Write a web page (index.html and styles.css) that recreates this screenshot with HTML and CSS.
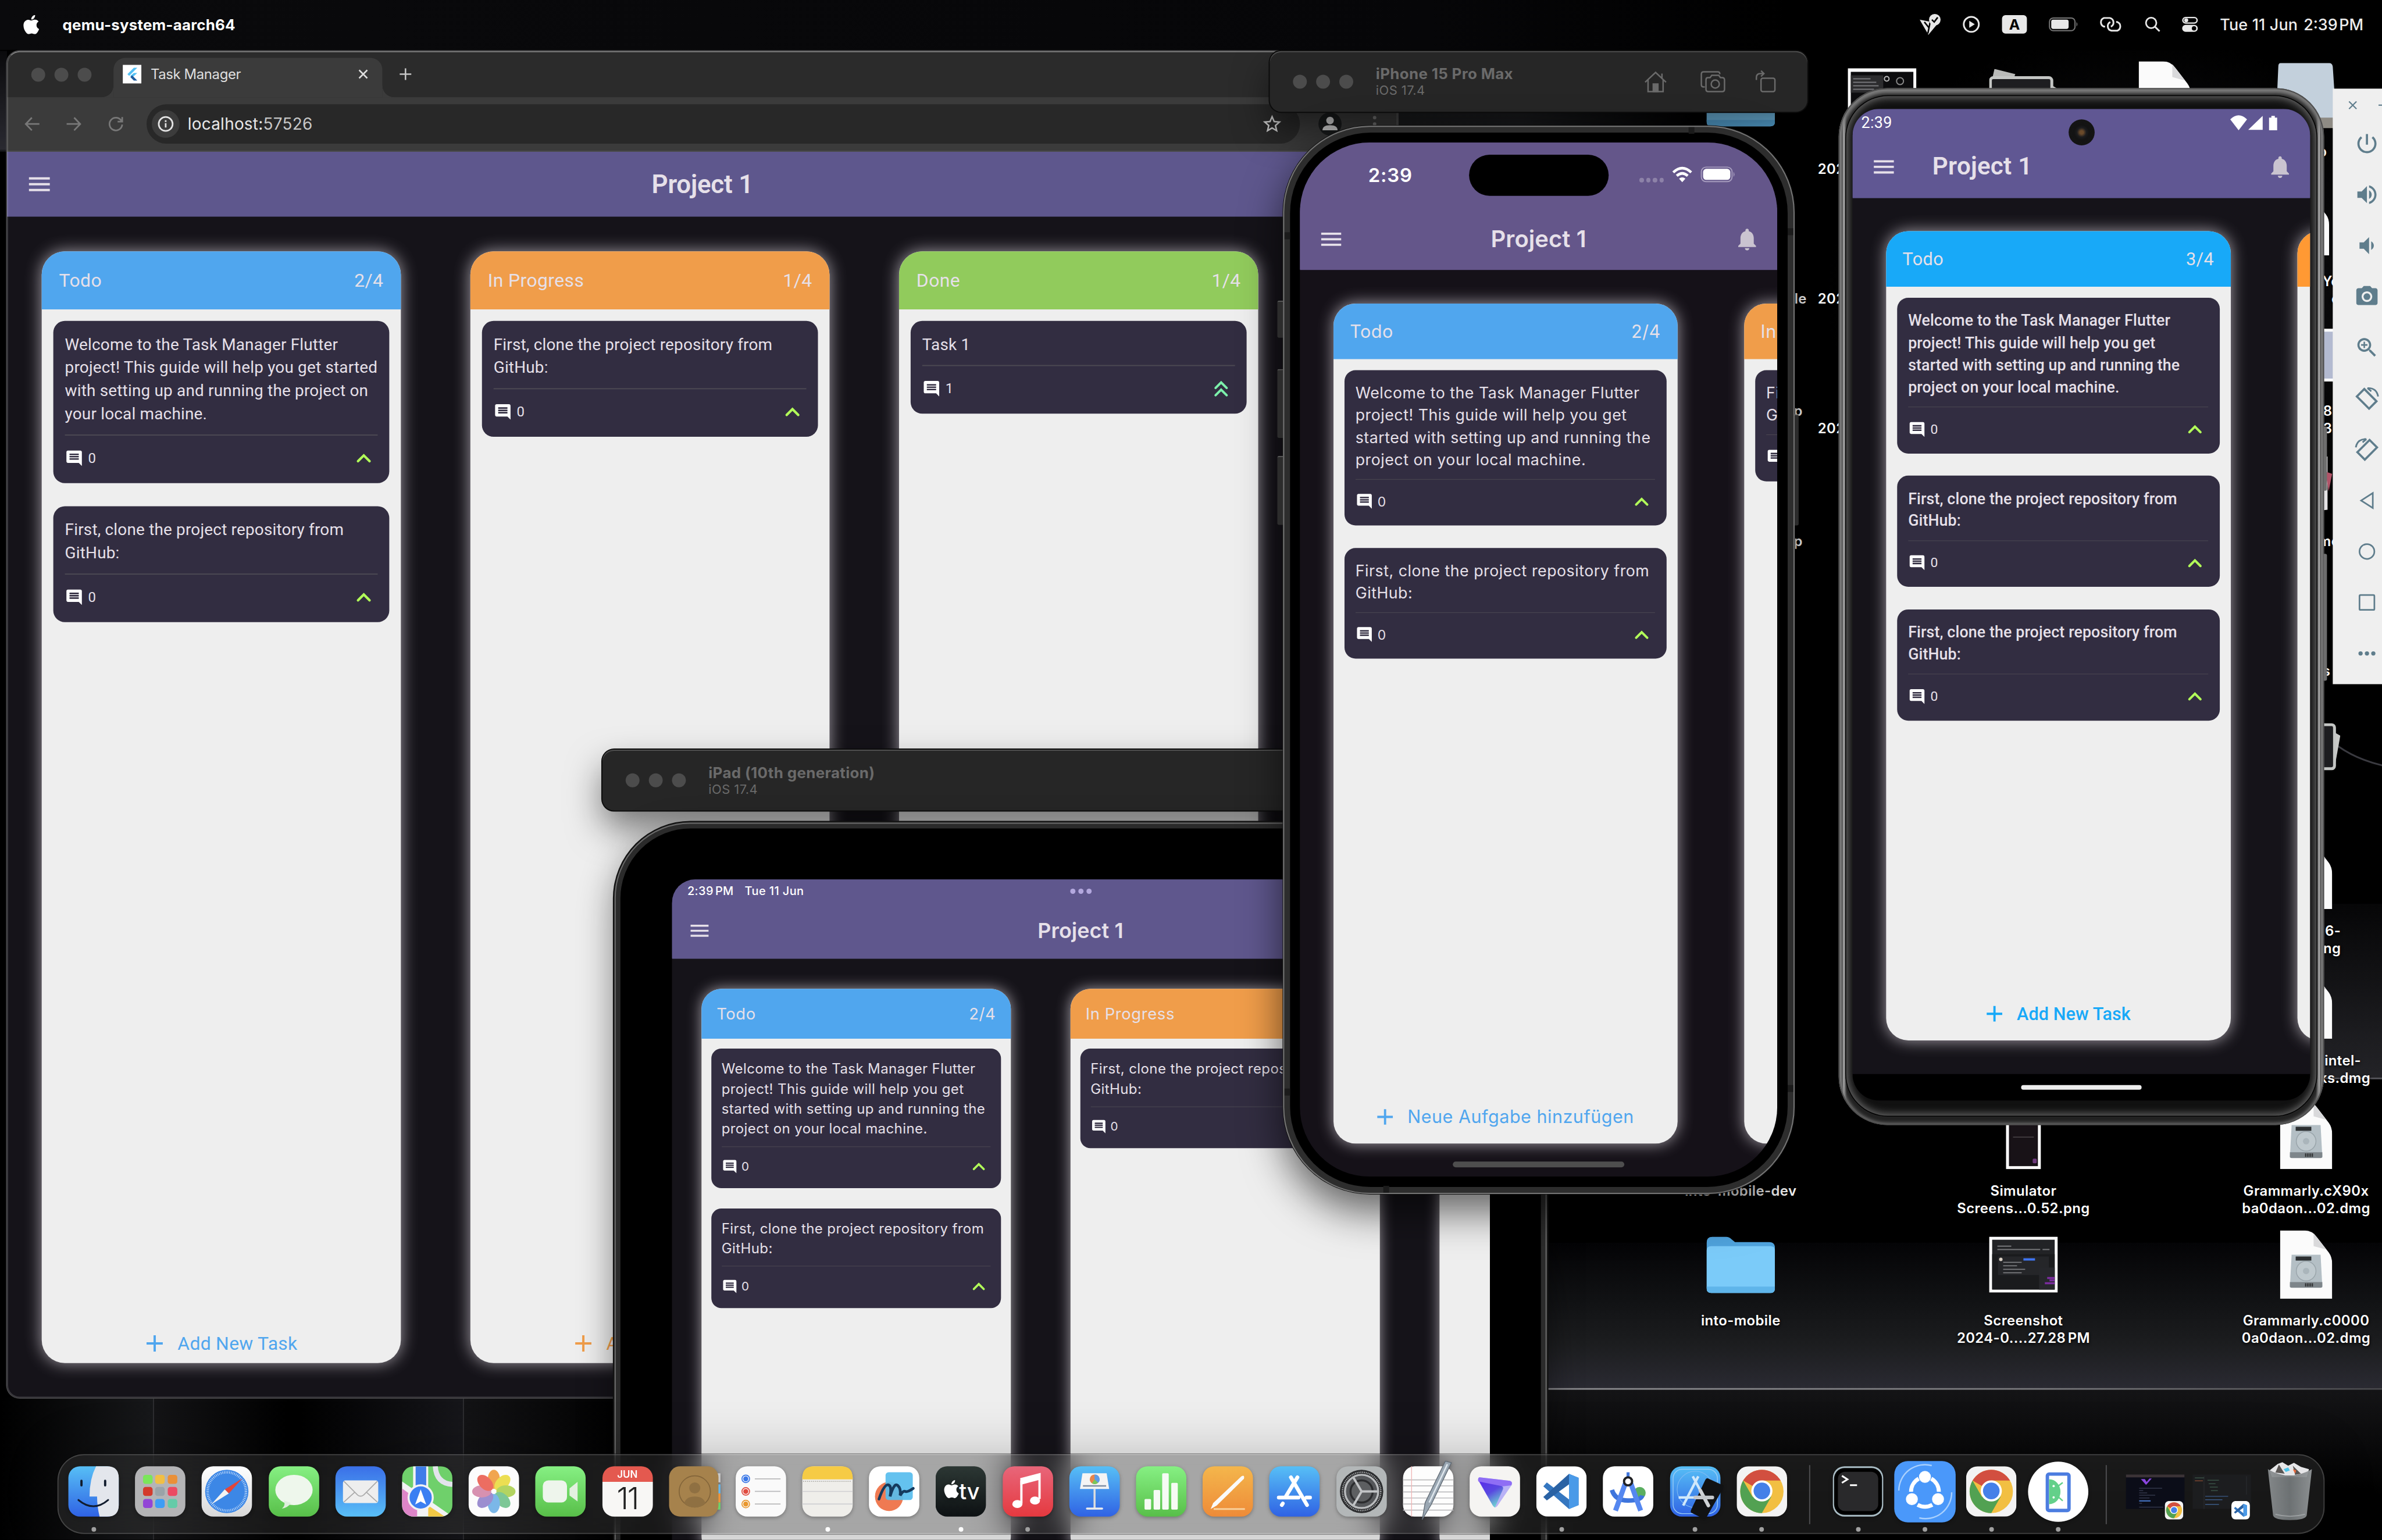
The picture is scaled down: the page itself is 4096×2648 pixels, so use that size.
FILE: index.html
```html
<!DOCTYPE html>
<html lang="en">
<head>
<meta charset="utf-8">
<title>Desktop</title>
<link rel="stylesheet" href="styles.css">
</head>
<body>
<svg class="sprite" aria-hidden="true">
  <symbol id="menu" viewBox="0 0 24 24"><path d="M3 18h18v-2H3v2zm0-5h18v-2H3v2zm0-7v2h18V6H3z"/></symbol>
  <symbol id="bell" viewBox="0 0 24 24"><path d="M12 22c1.1 0 2-.9 2-2h-4c0 1.1.89 2 2 2zm6-6v-5c0-3.07-1.64-5.64-4.5-6.32V4c0-.83-.67-1.5-1.5-1.5s-1.5.67-1.5 1.5v.68C7.63 5.36 6 7.92 6 11v5l-2 2v1h16v-1l-2-2z"/></symbol>
  <symbol id="comment" viewBox="0 0 24 24"><path d="M21.99 4c0-1.1-.89-2-1.99-2H4c-1.1 0-2 .9-2 2v12c0 1.1.9 2 2 2h14l4 4-.01-18zM18 14H6v-2h12v2zm0-3H6V9h12v2zm0-3H6V6h12v2z"/></symbol>
  <symbol id="up" viewBox="0 0 24 24"><path d="M7 14.6l5-5 5 5" fill="none" stroke="currentColor" stroke-width="2.1" stroke-linecap="round" stroke-linejoin="miter"/></symbol>
  <symbol id="up2" viewBox="0 0 24 24"><path d="M7.2 11.4l4.8-4.8 4.8 4.8M7.2 17.6l4.8-4.8 4.8 4.8" fill="none" stroke="currentColor" stroke-width="2" stroke-linecap="round"/></symbol>
  <symbol id="add" viewBox="0 0 24 24"><path d="M19 13h-6v6h-2v-6H5v-2h6V5h2v6h6v2z"/></symbol>
  <symbol id="star" viewBox="0 0 24 24"><path d="M22 9.24l-7.19-.62L12 2 9.19 8.63 2 9.24l5.46 4.73L5.82 21 12 17.27 18.18 21l-1.63-7.03L22 9.24zM12 15.4l-3.76 2.27 1-4.28-3.32-2.88 4.38-.38L12 6.1l1.71 4.04 4.38.38-3.32 2.88 1 4.28L12 15.4z"/></symbol>
  <symbol id="apple" viewBox="0 0 24 24"><path d="M12.152 6.896c-.948 0-2.415-1.078-3.96-1.04-2.04.027-3.91 1.183-4.961 3.014-2.117 3.675-.546 9.103 1.519 12.09 1.013 1.454 2.208 3.09 3.792 3.039 1.52-.065 2.09-.987 3.935-.987 1.831 0 2.35.987 3.96.948 1.637-.026 2.676-1.48 3.676-2.948 1.156-1.688 1.636-3.325 1.662-3.415-.039-.013-3.182-1.221-3.22-4.857-.026-3.04 2.48-4.494 2.597-4.559-1.429-2.09-3.623-2.324-4.39-2.376-2-.156-3.675 1.09-4.61 1.09zM15.53 3.83c.843-1.012 1.4-2.427 1.245-3.83-1.207.052-2.662.805-3.532 1.818-.78.896-1.454 2.338-1.273 3.714 1.338.104 2.715-.688 3.559-1.701"/></symbol>
  <symbol id="folder" viewBox="0 0 118 100"><path d="M0 12Q0 2 10 2H34Q39 2 43 6L49 11H108Q118 11 118 21V90H0Z" fill="#4fa3dd"/><path d="M0 26Q0 18 8 18H110Q118 18 118 26V91Q118 99 110 99H8Q0 99 0 91Z" fill="#7bcbf9"/><path d="M0 88H118V91Q118 99 110 99H8Q0 99 0 91Z" fill="#5fb5ea"/></symbol>
  <symbol id="doc" viewBox="0 0 90 118"><path d="M0 0H42Q56 0 64 12L84 38Q90 46 90 58V118H0Z" fill="#fbfbfb"/><path d="M58 5L58 27L80 33Z" fill="#d9d9db"/></symbol>
  <symbol id="dmg" viewBox="0 0 90 118"><use href="#doc"/><path d="M20 42H70L73 98H17Z" fill="#b4bfc5"/><path d="M17 89H73V96Q73 99 70 99H20Q17 99 17 96Z" fill="#7d858a"/><circle cx="45" cy="70" r="17" fill="#bfc9ce" stroke="#9aa5ab" stroke-width="1.5"/><circle cx="45" cy="70" r="5.500" fill="#aab5bb"/><rect x="27" y="45" width="27" height="7" fill="#2c2f31"/><path d="M44 91v6M47 91v6M50 91v6M53 91v6M56 91v6" stroke="#222" stroke-width="1.600"/></symbol>
  <symbol id="stack" viewBox="0 0 118 100"><path d="M9 0L45 9 40 22H4Z" fill="#b9bab8"/><path d="M104 26L118 34 108 90H100Z" fill="#c9cac8"/><rect x="2" y="15" width="106" height="76" rx="5" fill="#1d1d20" stroke="#c4c6c4" stroke-width="5"/></symbol>
  <symbol id="chrome" viewBox="0 0 100 100"><rect width="100" height="100" rx="23" fill="#f3f3f3"/><circle cx="50" cy="50" r="43" fill="#f2bf42"/><path d="M50 50L12.800 28.500A43 43 0 0 1 87.200 28.500Z" fill="#d24f40"/><path d="M50 50L87.200 28.500H50Z" fill="#d24f40"/><path d="M12.800 28.500A43 43 0 0 0 50 93L68.600 60.700 50 50 31.400 60.700Z" fill="#52a152"/><path d="M50 93L70 58 87.200 28.500H50L68.600 60Z" fill="#f2bf42"/><circle cx="50" cy="49" r="21" fill="#fff"/><circle cx="50" cy="49" r="16.500" fill="#4580e8"/></symbol>
  <symbol id="vscode" viewBox="0 0 100 100"><rect width="100" height="100" rx="23" fill="#fff"/><path d="M65 15L84 23V77L65 85 14 40 21 32 65 66Z" fill="#3577c0"/><path d="M65 15V36L21 68 14 61Z" fill="#2a62a4"/><path d="M65 15L84 23V77L65 85Z" fill="#4a9ae8"/></symbol>
  <linearGradient id="gGreen" x2="0" y2="1"><stop stop-color="#86f083"/><stop offset="1" stop-color="#58bf49"/></linearGradient>
  <linearGradient id="gBlue" x2="0" y2="1"><stop stop-color="#3a6fe8"/><stop offset="1" stop-color="#59bff7"/></linearGradient>
  <linearGradient id="gSky" x2="0" y2="1"><stop stop-color="#57bff6"/><stop offset="1" stop-color="#2f62e4"/></linearGradient>
  <linearGradient id="gWhite" x2="0" y2="1"><stop stop-color="#fff"/><stop offset="1" stop-color="#d8d8d8"/></linearGradient>
  <linearGradient id="gRed" x2="0" y2="1"><stop stop-color="#e8667a"/><stop offset="1" stop-color="#e5393f"/></linearGradient>
  <linearGradient id="gOrange" x2="0" y2="1"><stop stop-color="#f4b64c"/><stop offset="1" stop-color="#ee8b38"/></linearGradient>
  <linearGradient id="gTrash"><stop stop-color="#8b8f91"/><stop offset=".5" stop-color="#73787a"/><stop offset="1" stop-color="#94989a"/></linearGradient>
  <linearGradient id="gProton" x1="0.200" y1="0" x2="0.700" y2="1"><stop stop-color="#5a2bea"/><stop offset=".5" stop-color="#5948e0"/><stop offset="1" stop-color="#6fe0d0"/></linearGradient>
</svg>

<div class="desktop">
  <div class="wall">
    <div class="panels"><i></i><i></i><i></i></div>
    <svg class="arc" viewBox="0 0 80 40"><path d="M0 0Q34 24 80 34" fill="none" stroke="#3a3a40" stroke-width="3"/></svg>
  </div>

  <!-- Desktop files -->
  <div class="files">
    <div class="file c1 r1"><div class="pic"><svg class="w118"><use href="#folder"/></svg></div></div>
    <div class="file c1 r2"><div class="pic"></div><p class="to" style="--end:114px"><br>le</p></div>
    <div class="file c1 r3"><div class="pic"></div><p class="to" style="--end:107px">p</p></div>
    <div class="file c1 r4"><div class="pic"></div><p class="to" style="--end:107px">p</p></div>
    <div class="file c1 r9"><div class="pic"></div><p>into-mobile-dev</p></div>
    <div class="file c1 r10"><div class="pic"><svg class="w118"><use href="#folder"/></svg></div><p>into-mobile</p></div>

    <div class="file c2 r1"><div class="pic"><svg class="w118 tall" viewBox="0 0 118 102"><rect width="118" height="102" fill="#fff"/><rect x="5" y="6" width="108" height="92" fill="#0c0c0e"/><rect x="5" y="12" width="56" height="30" fill="#2c2c2e"/><path d="M9 18h30M9 24h40M9 30h44M9 36h36" stroke="#77777b" stroke-width="2"/><circle cx="67" cy="18" r="4" fill="none" stroke="#bbb" stroke-width="2"/><circle cx="90" cy="22" r="6" fill="none" stroke="#888" stroke-width="2"/></svg></div><p class="from"><br>202</p></div>
    <div class="file c2 r2"><div class="pic"></div><p class="from"><br>202</p></div>
    <div class="file c2 r3"><div class="pic"></div><p class="from"><br>202</p></div>

    <div class="file c3 r1"><div class="pic"><svg class="w118"><use href="#stack"/></svg></div></div>
    <div class="file c3 r9"><div class="pic"><svg class="w60" viewBox="0 0 60 118"><rect width="60" height="118" fill="#fff"/><rect x="5" y="5" width="50" height="108" fill="#181217"/><path d="M12 63h36" stroke="#4a4549" stroke-width="1.500"/><rect x="46" y="100" width="7" height="8" rx="2" fill="#6e3a7c"/></svg></div><p>Simulator<br>Screens...0.52.png</p></div>
    <div class="file c3 r10"><div class="pic"><svg class="w118 low" viewBox="0 0 118 96"><rect width="118" height="96" fill="#fff"/><rect x="5" y="5" width="108" height="86" fill="#222326"/><rect x="5" y="30" width="108" height="61" fill="#1a1b1d"/><path d="M14 16h24M14 22h74M92 22h12" stroke="#77787b" stroke-width="2"/><rect x="15" y="34" width="88" height="32" fill="#252629"/><rect x="59" y="37" width="20" height="4" fill="#3f74f0"/><circle cx="20" cy="39" r="3" fill="#d8cfc3"/><path d="M24 44h32M24 50h24M24 56h38M24 62h32" stroke="#88898c" stroke-width="1.500"/><rect x="86" y="53" width="27" height="38" fill="#26272b"/><path d="M100 71h13M104 75h9M96 80h17" stroke="#7a2c9e" stroke-width="3.500"/></svg></div><p>Screenshot<br>2024-0....27.28<small> </small>PM</p></div>

    <div class="file c4 r1"><div class="pic"><svg class="w90"><use href="#doc"/><path d="M22 49H68" stroke="#7f97a3" stroke-width="3"/></svg></div></div>

    <div class="file c5 r1"><div class="pic"><svg class="w104" viewBox="0 0 104 112"><path d="M8 0H92Q97 0 98 6L104 96H0L4 6Q4 0 8 0Z" fill="#c3d0dc"/><path d="M0 94H104V108Q104 112 100 112H4Q0 112 0 108Z" fill="#8e8b84"/></svg></div><p class="to" style="--end:36px">p</p></div>
    <div class="file c5 r2"><div class="pic"><svg class="w90 low"><use href="#doc"/></svg></div><p class="to" style="--end:58px">Yo<br>c</p></div>
    <div class="file c5 r3"><div class="pic"><svg class="w118 low" viewBox="0 0 118 91"><rect width="118" height="91" fill="#fff"/><rect x="5" y="5" width="108" height="81" fill="#b3bad0"/></svg></div><p class="to" style="--end:45px">8<br>3</p></div>
    <div class="file c5 r4"><div class="pic"><svg class="w90" viewBox="0 0 90 100"><path d="M10 0H82V92L10 100Z" fill="#e4e2e4"/><path d="M78 26L90 30 84 60Z" fill="#b05468"/></svg></div><p class="to" style="--end:58px">me</p></div>
    <div class="file c5 r5"><div class="pic"></div><p class="to" style="--end:42px">s</p></div>
    <div class="file c5 r6"><div class="pic"><svg class="w118"><use href="#stack"/></svg></div></div>
    <div class="file c5 r7"><div class="pic"><svg class="w90"><use href="#doc"/></svg></div><p class="to" style="--end:60px">6-<br>ng</p></div>
    <div class="file c5 r8"><div class="pic"><svg class="w90"><use href="#doc"/></svg></div><p class="to" style="--end:111px"><span class="in">intel-</span><br>ks.dmg</p></div>
    <div class="file c5 r9"><div class="pic"><svg class="w90"><use href="#dmg"/></svg></div><p>Grammarly.cX90x<br>ba0daon...02.dmg</p></div>
    <div class="file c5 r10"><div class="pic"><svg class="w90"><use href="#dmg"/></svg></div><p>Grammarly.c0000<br>0a0daon...02.dmg</p></div>
  </div>

  <!-- Browser window -->
  <section class="browser">
    <div class="tabs">
      <div class="lights"><i></i><i></i><i></i></div>
      <div class="tab">
        <svg class="fav" viewBox="0 0 32 32"><rect width="32" height="32" fill="#fff"/><path d="M19 5h6L11 19l-3-3Z" fill="#54c1f5"/><path d="M19 14h6L16 22l-3-3Z" fill="#54c1f5"/><path d="M13 21l3-3 9 9h-6Z" fill="#1d5a9e"/></svg>
        <span>Task Manager</span>
        <svg class="x" viewBox="0 0 18 18"><path d="M2 2l14 14M16 2L2 16" stroke="#dedede" stroke-width="2.600"/></svg>
      </div>
      <svg class="plus" viewBox="0 0 22 22"><path d="M11 1v20M1 11h20" stroke="#c6c6c6" stroke-width="2.600"/></svg>
    </div>
    <div class="toolbar">
      <svg viewBox="0 0 28 28"><path d="M26 14H3M13 3L2.500 14 13 25"/></svg>
      <svg viewBox="0 0 28 28"><path d="M2 14H25M15 3L25.500 14 15 25"/></svg>
      <svg viewBox="0 0 28 28"><path d="M23.500 8.500A11 11 0 1 0 25 15M25 2V10H17"/></svg>
      <div class="omni">
        <span class="info"><svg viewBox="0 0 28 28"><circle cx="14" cy="14" r="12" fill="none" stroke="#e3e3e3" stroke-width="2.800"/><path d="M14 12.500V20M14 7.500v3" stroke="#e3e3e3" stroke-width="2.800"/></svg></span>
        <span class="url"><b>localhost:</b>57526</span>
        <svg class="fav2"><use href="#star"/></svg>
      </div>
      <span class="avatar"><svg viewBox="0 0 40 40"><circle cx="20" cy="14" r="6.500"/><path d="M7 31Q7 22 20 22T33 31Z"/></svg></span>
      <span class="kebab"><i></i><i></i><i></i></span>
    </div>
    <div class="app web">
      <header class="appbar"><svg class="ic"><use href="#menu"/></svg><h1>Project 1</h1><span></span></header>
      <main class="board">
        <article class="col todo">
          <header><span>Todo</span><span>2/4</span></header>
          <div class="list">
            <div class="card"><p>Welcome to the Task Manager Flutter project! This guide will help you get started with setting up and running the project on your local machine.</p><footer><svg class="cm"><use href="#comment"/></svg><span>0</span><svg class="pr"><use href="#up"/></svg></footer></div>
            <div class="card"><p>First, clone the project repository from GitHub:</p><footer><svg class="cm"><use href="#comment"/></svg><span>0</span><svg class="pr"><use href="#up"/></svg></footer></div>
          </div>
          <div class="addrow"><svg><use href="#add"/></svg>Add New Task</div>
        </article>
        <article class="col prog">
          <header><span>In Progress</span><span>1/4</span></header>
          <div class="list">
            <div class="card"><p>First, clone the project repository from GitHub:</p><footer><svg class="cm"><use href="#comment"/></svg><span>0</span><svg class="pr"><use href="#up"/></svg></footer></div>
          </div>
          <div class="addrow"><svg><use href="#add"/></svg>Add New Task</div>
        </article>
        <article class="col done">
          <header><span>Done</span><span>1/4</span></header>
          <div class="list">
            <div class="card"><p>Task 1</p><footer><svg class="cm"><use href="#comment"/></svg><span>1</span><svg class="pr two"><use href="#up2"/></svg></footer></div>
          </div>
        </article>
      </main>
    </div>
  </section>

  <!-- iPad simulator -->
  <section class="simbar ipadbar">
    <div class="lights"><i></i><i></i><i></i></div>
    <div class="dev"><b>iPad (10th generation)</b><span>iOS 17.4</span></div>
  </section>
  <section class="ipad">
    <div class="app tablet">
      <div class="status"><span>2:39<small> </small>PM</span><span>Tue 11 Jun</span><em><i></i><i></i><i></i></em></div>
      <header class="appbar"><svg class="ic"><use href="#menu"/></svg><h1>Project 1</h1><span></span></header>
      <main class="board">
        <article class="col todo">
          <header><span>Todo</span><span>2/4</span></header>
          <div class="list">
            <div class="card"><p>Welcome to the Task Manager Flutter project! This guide will help you get started with setting up and running the project on your local machine.</p><footer><svg class="cm"><use href="#comment"/></svg><span>0</span><svg class="pr"><use href="#up"/></svg></footer></div>
            <div class="card"><p>First, clone the project repository from GitHub:</p><footer><svg class="cm"><use href="#comment"/></svg><span>0</span><svg class="pr"><use href="#up"/></svg></footer></div>
          </div>
        </article>
        <article class="col prog">
          <header><span>In Progress</span></header>
          <div class="list">
            <div class="card"><p>First, clone the project repository from GitHub:</p><footer><svg class="cm"><use href="#comment"/></svg><span>0</span></footer></div>
          </div>
        </article>
        <article class="col done"><header></header></article>
      </main>
    </div>
  </section>

  <!-- iPhone simulator -->
  <section class="simbar phonebar">
    <div class="lights"><i></i><i></i><i></i></div>
    <div class="dev"><b>iPhone 15 Pro Max</b><span>iOS 17.4</span></div>
    <div class="acts">
      <svg viewBox="0 0 40 38"><path d="M2 20L20 3 38 20M7 16V36H33V16M31 13V5"/><path d="M16 36V23H24V36Z" fill="#6a6a6a"/></svg>
      <svg viewBox="0 0 44 38"><path d="M8 28H6Q2 28 2 24V6Q2 2 6 2H30Q34 2 34 6"/><path d="M13 12H17L20 8H32L35 12H38Q42 12 42 16V32Q42 36 38 36H14Q10 36 10 32V16Q10 12 13 12Z"/><circle cx="26" cy="23" r="7"/></svg>
      <svg viewBox="0 0 36 38"><rect x="10" y="13" width="24" height="23" rx="3"/><path d="M2 16V12Q2 5 9 5H14M10 0L15 5 10 10"/></svg>
    </div>
  </section>
  <section class="iphone">
    <i class="key k1"></i><i class="key k2"></i><i class="key k3"></i><i class="key k4"></i>
    <i class="band b1"></i><i class="band b2"></i><i class="band b3"></i><i class="band b4"></i><i class="band b5"></i><i class="band b6"></i>
    <div class="glass">
      <div class="app phone">
        <div class="status">
          <span class="clock">2:39</span><i class="island"></i>
          <div class="sys"><em><i></i><i></i><i></i><i></i></em>
            <svg class="wifi" viewBox="0 0 36 27"><path d="M2.500 9.500Q18-5 33.500 9.500M8.500 15.500Q18 7 27.500 15.500" fill="none" stroke="#fff" stroke-width="4.600"/><path d="M12.500 20.500Q18 16 23.500 20.500L18 26.500Z" fill="#fff"/></svg>
            <svg class="batt" viewBox="0 0 60 27"><rect x="1" y="1" width="53" height="25" rx="8" fill="none" stroke="#a59bbd" stroke-width="2"/><rect x="4" y="4" width="47" height="19" rx="5.500" fill="#fff"/><path d="M56.500 9Q60 13.500 56.500 18Z" fill="#a59bbd"/></svg>
          </div>
        </div>
        <header class="appbar"><svg class="ic"><use href="#menu"/></svg><h1>Project 1</h1><svg class="ic bell"><use href="#bell"/></svg></header>
        <main class="board">
          <article class="col todo">
            <header><span>Todo</span><span>2/4</span></header>
            <div class="list">
              <div class="card"><p>Welcome to the Task Manager Flutter project! This guide will help you get started with setting up and running the project on your local machine.</p><footer><svg class="cm"><use href="#comment"/></svg><span>0</span><svg class="pr"><use href="#up"/></svg></footer></div>
              <div class="card"><p>First, clone the project repository from GitHub:</p><footer><svg class="cm"><use href="#comment"/></svg><span>0</span><svg class="pr"><use href="#up"/></svg></footer></div>
            </div>
            <div class="addrow"><svg><use href="#add"/></svg>Neue Aufgabe hinzufügen</div>
          </article>
          <article class="col prog">
            <header><span>In</span></header>
            <div class="list"><div class="card"><p>Fi<br>G</p><footer><svg class="cm"><use href="#comment"/></svg></footer></div></div>
          </article>
        </main>
        <i class="homebar"></i>
      </div>
    </div>
  </section>

  <!-- Android emulator -->
  <section class="pixel">
    <i class="key p1"></i><i class="key p2"></i>
    <div class="rim">
      <div class="app droid">
        <div class="status"><span>2:39</span><i class="lens"></i>
          <svg viewBox="0 0 84 26"><path d="M14.500 26L0 7Q14.500-7 29 7Z"/><path d="M56 1V25H31Z"/><path d="M71 4V1H77V4H81V26H67V4Z"/></svg>
        </div>
        <header class="appbar"><svg class="ic"><use href="#menu"/></svg><h1>Project 1</h1><svg class="ic bell"><use href="#bell"/></svg></header>
        <main class="board">
          <article class="col todo">
            <header><span>Todo</span><span>3/4</span></header>
            <div class="list">
              <div class="card"><p>Welcome to the Task Manager Flutter project! This guide will help you get started with setting up and running the project on your local machine.</p><footer><svg class="cm"><use href="#comment"/></svg><span>0</span><svg class="pr"><use href="#up"/></svg></footer></div>
              <div class="card"><p>First, clone the project repository from GitHub:</p><footer><svg class="cm"><use href="#comment"/></svg><span>0</span><svg class="pr"><use href="#up"/></svg></footer></div>
              <div class="card"><p>First, clone the project repository from GitHub:</p><footer><svg class="cm"><use href="#comment"/></svg><span>0</span><svg class="pr"><use href="#up"/></svg></footer></div>
            </div>
            <div class="addrow"><svg><use href="#add"/></svg>Add New Task</div>
          </article>
          <article class="col prog"><header></header></article>
        </main>
        <div class="nav"><i></i></div>
      </div>
    </div>
  </section>

  <aside class="emubar">
    <div class="winctl"><svg viewBox="0 0 14 14"><path d="M1 1l12 12M13 1L1 13"/></svg><svg viewBox="0 0 14 14"><path d="M0 7H14"/></svg></div>
    <svg viewBox="0 0 24 24"><path d="M13 3h-2v10h2V3zm4.830 2.170l-1.420 1.420C17.990 7.860 19 9.810 19 12c0 3.870-3.130 7-7 7s-7-3.130-7-7c0-2.190 1.010-4.140 2.580-5.420L6.170 5.170C4.230 6.820 3 9.260 3 12c0 4.970 4.030 9 9 9s9-4.030 9-9c0-2.740-1.230-5.180-3.170-6.830z"/></svg>
    <svg viewBox="0 0 24 24"><path d="M3 9v6h4l5 5V4L7 9H3zm13.500 3c0-1.770-1.020-3.290-2.500-4.030v8.050c1.480-.73 2.500-2.250 2.500-4.020zM14 3.230v2.060c2.890.86 5 3.540 5 6.710s-2.110 5.850-5 6.710v2.060c4.010-.91 7-4.490 7-8.770s-2.990-7.860-7-8.770z"/></svg>
    <svg viewBox="0 0 24 24"><path d="M18.500 12c0-1.770-1.020-3.290-2.500-4.030v8.050c1.480-.73 2.500-2.250 2.500-4.020zM5 9v6h4l5 5V4L9 9H5z"/></svg>
    <svg viewBox="0 0 24 24"><path d="M9 2L7.170 4H4c-1.100 0-2 .9-2 2v12c0 1.100.9 2 2 2h16c1.100 0 2-.9 2-2V6c0-1.100-.9-2-2-2h-3.170L15 2H9zm3 15c-2.760 0-5-2.240-5-5s2.240-5 5-5 5 2.240 5 5-2.240 5-5 5z"/><circle cx="12" cy="12" r="3.200"/></svg>
    <svg viewBox="0 0 24 24"><path d="M15.500 14h-.79l-.28-.27C15.410 12.590 16 11.110 16 9.500 16 5.910 13.090 3 9.500 3S3 5.910 3 9.500 5.910 16 9.500 16c1.610 0 3.090-.59 4.230-1.570l.27.28v.79l5 4.990L20.490 19l-4.990-5zm-6 0C7.010 14 5 11.990 5 9.500S7.010 5 9.500 5 14 7.010 14 9.500 11.990 14 9.500 14z"/><path d="M12.500 10.200h-2.300v2.300H8.800v-2.300H6.500V8.800h2.300V6.500h1.400v2.300h2.300z"/></svg>
    <svg viewBox="0 0 24 24"><path d="M9.500 3L21 14.500 14 21.500 2.500 10Z" fill="none" stroke="#5f7d8c" stroke-width="2"/><path d="M12.500 2.200Q21 1.800 22.500 10M12.500 2.200l3.600 3" fill="none" stroke="#5f7d8c" stroke-width="1.600"/></svg>
    <svg viewBox="0 0 24 24"><path d="M14.500 3L3 14.500 10 21.500 21.500 10Z" fill="none" stroke="#5f7d8c" stroke-width="2"/><path d="M11.500 2.200Q3 1.800 1.500 10M11.500 2.200l-3.600 3" fill="none" stroke="#5f7d8c" stroke-width="1.600"/></svg>
    <svg viewBox="0 0 24 24"><path d="M17.500 5V19L6.500 12Z" fill="none" stroke="#5f7d8c" stroke-width="1.500"/></svg>
    <svg viewBox="0 0 24 24"><circle cx="12" cy="12" r="7" fill="none" stroke="#5f7d8c" stroke-width="1.500"/></svg>
    <svg viewBox="0 0 24 24"><rect x="5" y="5" width="14" height="14" rx="1" fill="none" stroke="#5f7d8c" stroke-width="1.500"/></svg>
    <svg viewBox="0 0 24 24"><circle cx="6" cy="12" r="2"/><circle cx="12" cy="12" r="2"/><circle cx="18" cy="12" r="2"/></svg>
  </aside>

  <!-- Menu bar -->
  <nav class="menubar">
    <svg class="logo"><use href="#apple"/></svg><b>qemu-system-aarch64</b>
    <div class="tray">
      <svg class="t36" viewBox="0 0 36 36"><path d="M0 10L20 14 30 18 15 36Z" fill="#e8e8e8"/><path d="M8 14L16 24M18 14L14 34" stroke="#000" stroke-width="2.500"/><circle cx="26" cy="10" r="10" fill="#e8e8e8"/><path d="M21 10l4 4 6-8" fill="none" stroke="#000" stroke-width="2.600"/></svg>
      <svg class="t30" viewBox="0 0 30 30"><circle cx="15" cy="15" r="13" fill="none" stroke="#e8e8e8" stroke-width="3"/><path d="M11.500 9L21 15 11.500 21Z" fill="#e8e8e8"/></svg>
      <span class="kbd">A</span>
      <svg class="t51" viewBox="0 0 51 24"><rect x="1" y="1" width="44" height="22" rx="6.500" fill="none" stroke="#777" stroke-width="2"/><rect x="4" y="4" width="30" height="16" rx="3.500" fill="#e8e8e8"/><path d="M47.500 8Q51 12 47.500 16Z" fill="#777"/></svg>
      <svg class="t43" viewBox="0 0 43 26"><path d="M12 17H10A8 8 0 0 1 10 2H20A8 8 0 0 1 22 17M31 9H33A8 8 0 0 1 33 24H23A8 8 0 0 1 21 9" fill="none" stroke="#e8e8e8" stroke-width="3"/></svg>
      <svg class="t26" viewBox="0 0 26 26"><circle cx="10.500" cy="10.500" r="9" fill="none" stroke="#e8e8e8" stroke-width="2.800"/><path d="M17 17l8 8" stroke="#e8e8e8" stroke-width="3"/></svg>
      <svg class="t27" viewBox="0 0 27 26"><rect x="1.200" y="1.200" width="24.600" height="9.600" rx="4.800" fill="none" stroke="#e8e8e8" stroke-width="2.400"/><circle cx="7" cy="6" r="3.500" fill="#e8e8e8"/><rect y="14" width="27" height="12" rx="6" fill="#e8e8e8"/><circle cx="20.500" cy="20" r="3.800" fill="#000"/></svg>
      <span class="date">Tue 11 Jun</span><span class="time">2:39<small> </small>PM</span>
    </div>
  </nav>

  <!-- Dock -->
  <footer class="dock">
    <div class="slot on"><svg viewBox="0 0 100 100"><rect width="100" height="100" rx="23" fill="url(#gSky)"/><path d="M55 0H77Q100 0 100 23V77Q100 100 77 100H62Q57 80 57 60H42Q42 25 55 0Z" fill="#e3e6ec"/><path d="M26 29v9M73 29v9" stroke="#111c2e" stroke-width="4.500" stroke-linecap="round"/><path d="M20 67Q50 92 79 67" fill="none" stroke="#111c2e" stroke-width="3.500" stroke-linecap="round"/></svg></div>
    <div class="slot"><svg viewBox="0 0 100 100"><rect width="100" height="100" rx="23" fill="#b4b4b6"/><g><rect x="16" y="17" width="19" height="18" rx="5" fill="#7be65a"/><rect x="40" y="17" width="19" height="18" rx="5" fill="#f1bf45"/><rect x="65" y="17" width="19" height="18" rx="5" fill="#ea9038"/><rect x="16" y="41" width="19" height="18" rx="5" fill="#d33a2c"/><rect x="40" y="41" width="19" height="18" rx="5" fill="#9aa3a8"/><rect x="65" y="41" width="19" height="18" rx="5" fill="#ec4a62"/><rect x="16" y="65" width="19" height="18" rx="5" fill="#9245d6"/><rect x="40" y="65" width="19" height="18" rx="5" fill="#3d9df5"/><rect x="65" y="65" width="19" height="18" rx="5" fill="#64cba8"/></g></svg></div>
    <div class="slot"><svg viewBox="0 0 100 100"><rect width="100" height="100" rx="23" fill="url(#gWhite)"/><circle cx="50" cy="50" r="43" fill="#3c87e6"/><circle cx="50" cy="50" r="38" fill="none" stroke="#cfe3fa" stroke-width="5" stroke-dasharray="1.200 2.200"/><path d="M81 24L46 46 54 54Z" fill="#e2453a"/><path d="M19 76L46 46 54 54Z" fill="#f3f3f3"/></svg></div>
    <div class="slot"><svg viewBox="0 0 100 100"><rect width="100" height="100" rx="23" fill="url(#gGreen)"/><ellipse cx="50" cy="47" rx="37" ry="30" fill="#eef7ec"/><path d="M30 68Q34 78 26 84Q38 82 44 73Z" fill="#dfeedd"/></svg></div>
    <div class="slot"><svg viewBox="0 0 100 100"><rect width="100" height="100" rx="23" fill="url(#gBlue)"/><rect x="15" y="28" width="70" height="45" rx="5" fill="#eeeeee"/><path d="M17 30L44 57Q50 62 56 57L83 30M17 71L38 52M83 71L62 52" fill="none" stroke="#a9a9a9" stroke-width="2"/></svg></div>
    <div class="slot"><svg viewBox="0 0 100 100"><clipPath id="rr"><rect width="100" height="100" rx="23"/></clipPath><g clip-path="url(#rr)"><rect width="100" height="100" fill="#6fd06b"/><path d="M0 30L100 100H0Z" fill="#f2f2f4"/><path d="M0 44L30 66V100H0Z" fill="#dd85c8"/><path d="M52 78L85 100H52Z" fill="#f3c945"/><path d="M22 0H52V80H22Z" fill="#f2f2f4"/><path d="M27 0H48V40H27Z" fill="#3f7de8"/><path d="M66 0Q68 34 100 36" fill="none" stroke="#e3e3ec" stroke-width="10"/></g><circle cx="37" cy="62" r="24" fill="#3b7ff2" stroke="#f2f2f2" stroke-width="4"/><path d="M37 46L48 76 37 70 26 76Z" fill="#fff"/></svg></div>
    <div class="slot"><svg viewBox="0 0 100 100"><rect width="100" height="100" rx="23" fill="#fcfcfc"/><g opacity=".88"><ellipse cx="50" cy="26" rx="12" ry="19" fill="#f09a38"/><ellipse cx="50" cy="26" rx="12" ry="19" fill="#eadb3b" transform="rotate(45 50 50)"/><ellipse cx="50" cy="26" rx="12" ry="19" fill="#a9cf4c" transform="rotate(90 50 50)"/><ellipse cx="50" cy="26" rx="12" ry="19" fill="#6cc089" transform="rotate(135 50 50)"/><ellipse cx="50" cy="26" rx="12" ry="19" fill="#6aaee6" transform="rotate(180 50 50)"/><ellipse cx="50" cy="26" rx="12" ry="19" fill="#8f7fcb" transform="rotate(225 50 50)"/><ellipse cx="50" cy="26" rx="12" ry="19" fill="#d283a6" transform="rotate(270 50 50)"/><ellipse cx="50" cy="26" rx="12" ry="19" fill="#ea5a4c" transform="rotate(315 50 50)"/></g></svg></div>
    <div class="slot"><svg viewBox="0 0 100 100"><rect width="100" height="100" rx="23" fill="url(#gGreen)"/><rect x="15" y="28" width="48" height="44" rx="11" fill="#eef5ec"/><path d="M68 44L84 31V70L68 58Z" fill="#e3f0e0"/></svg></div>
    <div class="slot cal"><b>JUN</b><span>11</span></div>
    <div class="slot"><svg viewBox="0 0 100 100"><path d="M88 14h14v18H88z" fill="#c9c9c9"/><path d="M88 36h14v18H88z" fill="#64b7ee"/><path d="M88 54h14v18H88z" fill="#f0953a"/><path d="M88 72h14v14H88z" fill="#6ed16c"/><rect width="98" height="100" rx="22" fill="#a6824c"/><circle cx="51" cy="50" r="31" fill="none" stroke="#83653a" stroke-width="2"/><circle cx="51" cy="43" r="11" fill="#8f7042"/><path d="M30 73Q34 60 51 60T72 73Q64 82 51 82T30 73Z" fill="#8f7042"/></svg></div>
    <div class="slot"><svg viewBox="0 0 100 100"><rect width="100" height="100" rx="23" fill="#fafafa"/><g fill="none" stroke-width="2"><circle cx="20" cy="25" r="7.500" stroke="#3a78e8"/><circle cx="20" cy="50" r="7.500" stroke="#e04b3f"/><circle cx="20" cy="75" r="7.500" stroke="#e9982f"/></g><circle cx="20" cy="25" r="5" fill="#3a78e8"/><circle cx="20" cy="50" r="5" fill="#e04b3f"/><circle cx="20" cy="75" r="5" fill="#e9982f"/><path d="M38 25h51M38 50h51M38 75h51" stroke="#b9b9bb" stroke-width="2"/></svg></div>
    <div class="slot on lit"><svg viewBox="0 0 100 100"><rect width="100" height="100" rx="23" fill="#efeeea"/><path d="M0 26V23Q0 0 23 0H77Q100 0 100 23V26Z" fill="#f6cb45"/><path d="M2 30H98" stroke="#9a9a95" stroke-width="2" stroke-dasharray="1.500 2.500"/><path d="M0 50h100M0 75h100" stroke="#cfcfd2" stroke-width="1.800"/></svg></div>
    <div class="slot"><svg viewBox="0 0 100 100"><rect width="100" height="100" rx="23" fill="#fff"/><ellipse cx="40" cy="60" rx="28" ry="29" fill="#ef7a52"/><rect x="33" y="12" width="54" height="55" rx="6" fill="#57bdee" opacity=".92"/><path d="M20 65Q30 36 38 37T42 60Q50 32 57 38T62 58Q68 48 72 50T88 44" fill="none" stroke="#153a5e" stroke-width="5.500" stroke-linecap="round"/></svg></div>
    <div class="slot on lit tv"><svg><use href="#apple"/></svg><span>tv</span></div>
    <div class="slot on"><svg viewBox="0 0 100 100"><rect width="100" height="100" rx="23" fill="url(#gRed)"/><path d="M35 26L73 16V65" fill="none" stroke="#fff" stroke-width="4.500"/><path d="M35 26L73 16V27L35 37Z" fill="#fff"/><path d="M37 28V74" stroke="#fff" stroke-width="4.500"/><ellipse cx="29" cy="75" rx="10" ry="8" fill="#fff"/><ellipse cx="64" cy="68" rx="10" ry="8" fill="#fff"/></svg></div>
    <div class="slot"><svg viewBox="0 0 100 100"><rect width="100" height="100" rx="23" fill="url(#gSky)"/><path d="M26 14H74L79 45H21Z" fill="#f4f4f4"/><path d="M48 45h4V84h-4z" fill="#dedede"/><rect x="33" y="82" width="34" height="4" rx="2" fill="#ececec"/><circle cx="50" cy="26" r="9.500" fill="#e8864c"/><path d="M50 26V16.500A9.500 9.500 0 0 1 57 33Z" fill="#5e9be8"/><path d="M50 26L57 33A9.500 9.500 0 0 1 45 34Z" fill="#76c85c"/><path d="M27 39H73" stroke="#7e8ea5" stroke-width="3"/></svg></div>
    <div class="slot"><svg viewBox="0 0 100 100"><rect width="100" height="100" rx="23" fill="url(#gGreen)"/><g fill="#f6fbf4"><rect x="17" y="65" width="13" height="21" rx="2"/><rect x="35" y="47" width="13" height="39" rx="2"/><rect x="52" y="14" width="13" height="72" rx="2"/><rect x="70" y="33" width="13" height="53" rx="2"/></g></svg></div>
    <div class="slot"><svg viewBox="0 0 100 100"><rect width="100" height="100" rx="23" fill="url(#gOrange)"/><path d="M77 20Q84 16 82 25L28 78 16 85 21 73Z" fill="#fafafa"/><path d="M22 85H84" stroke="#f8cf9a" stroke-width="3.500"/></svg></div>
    <div class="slot"><svg viewBox="0 0 100 100"><rect width="100" height="100" rx="23" fill="url(#gSky)"/><g stroke="#fff" stroke-width="7.500" stroke-linecap="round"><path d="M56 22L33 60M43 22L75 77M19 62H58M74 62H81M27 74L25 77"/></g></svg></div>
    <div class="slot"><svg viewBox="0 0 100 100"><rect width="100" height="100" rx="23" fill="#b3b7b8"/><circle cx="50" cy="50" r="43" fill="#2b2c2e"/><circle cx="50" cy="50" r="38" fill="none" stroke="#a9abad" stroke-width="3" stroke-dasharray="1.800 1.800"/><circle cx="50" cy="50" r="33" fill="#55575a" stroke="#b9bbbd" stroke-width="4"/><circle cx="50" cy="50" r="22" fill="#5d5f61" stroke="#2b2c2e" stroke-width="4"/><path d="M50 50H82M50 50L34 23M50 50L34 77" stroke="#c2c4c6" stroke-width="4.500"/></svg></div>
    <div class="slot"><svg viewBox="0 0 100 100"><rect width="100" height="100" rx="23" fill="#fdfdfd"/><path d="M0 27h100M0 39h100M0 51h100M0 63h100M0 75h100M0 87h100" stroke="#bdbdbf" stroke-width="2"/><path d="M17 0V100" stroke="#f0b5b5" stroke-width="1.500"/><path d="M84-10L96-7 56 76 38 106 44 72Z" fill="#9aa7b3" stroke="#5e6872" stroke-width="1.500"/><path d="M88-4L52 72" stroke="#dfe7ee" stroke-width="3"/></svg></div>
    <div class="slot"><svg viewBox="0 0 100 100"><rect width="100" height="100" rx="23" fill="#f5f4f2"/><path d="M20 22L80 29Q86 31 83 38L55 79Q50 85 46 78L17 28Q16 22 20 22Z" fill="#b9b2f6"/><path d="M17 27Q18 22 24 23L62 38Q68 41 66 46L50 82L46 78Z" fill="url(#gProton)"/><path d="M20 22L80 29Q86 31 83 38L66 40 17 30Q16 22 20 22Z" fill="#8f6ef5"/></svg></div>
    <div class="slot on"><svg><use href="#vscode"/></svg></div>
    <div class="slot"><svg viewBox="0 0 100 100"><rect width="100" height="100" rx="23" fill="#fff"/><circle cx="73" cy="53" r="12" fill="#5bae60"/><path d="M18 47Q24 68 50 68T78 58" fill="none" stroke="#3e74dc" stroke-width="9"/><path d="M46 30L28 80 25 88M54 30L72 80 75 88" fill="none" stroke="#5587f0" stroke-width="10" stroke-linejoin="round"/><path d="M50 12V24" stroke="#4177dd" stroke-width="6"/><circle cx="50" cy="30" r="8" fill="#fff" stroke="#202124" stroke-width="4.500"/></svg></div>
    <div class="slot on"><svg viewBox="0 0 100 100"><rect width="100" height="100" rx="23" fill="url(#gSky)"/><rect x="6" y="6" width="88" height="88" rx="18" fill="none" stroke="#9fd0f6" stroke-width="1.500"/><circle cx="50" cy="46" r="36" fill="none" stroke="#83bdf3" stroke-width="1.200"/><path d="M56 20L26 78M45 20L60 48M17 62H50" fill="none" stroke="#cfe8fb" stroke-width="5"/><path d="M75 24L105 38Q107 40 104 46L72 102Q70 106 66 104L42 92Q40 90 42 86L70 27Q72 23 75 24Z" fill="#111214"/><path d="M60 48L76 78" stroke="#cfd2d6" stroke-width="7" stroke-linecap="round"/><path d="M50 62H84" stroke="#c4c7cb" stroke-width="7" stroke-linecap="round"/></svg></div>
    <div class="slot on"><svg><use href="#chrome"/></svg></div>
    <i class="rule"></i>
    <div class="slot on"><svg viewBox="0 0 100 100"><rect width="100" height="100" rx="23" fill="#a9bcc4"/><rect x="2.500" y="3.500" width="95" height="93" rx="21" fill="#000"/><rect x="10" y="11" width="80" height="78" rx="14" fill="#29292b"/><path d="M18 19L29 26 18 33M34 37.500H48" fill="none" stroke="#fff" stroke-width="3.500"/></svg></div>
    <div class="slot on"><svg class="big" viewBox="0 0 108 108"><rect width="108" height="108" rx="24" fill="#4a98fa"/><path d="M8 52A46 46 0 0 1 66 8M101 55A46 46 0 0 1 44 100" fill="none" stroke="#a9d0fd" stroke-width="2.500"/><path d="M29.500 54A27 27 0 0 1 43 31M65 31A27 27 0 0 1 78.500 54M67 77A27 27 0 0 1 41 77" fill="none" stroke="#fff" stroke-width="7"/><circle cx="54" cy="28" r="10.500" fill="#fff"/><circle cx="31" cy="67" r="10.500" fill="#fff"/><circle cx="77" cy="67" r="10.500" fill="#fff"/></svg></div>
    <div class="slot on"><svg><use href="#chrome"/></svg></div>
    <div class="slot on"><svg class="big" viewBox="0 0 108 108"><circle cx="54" cy="54" r="53" fill="#fff"/><rect x="35" y="23" width="38" height="64" rx="3" fill="#fff" stroke="#4c7de0" stroke-width="6"/><path d="M38 32A20 22 0 0 1 38 76Z" fill="#63d08a"/><path d="M54 44L62 38M54 63L62 70" stroke="#63d08a" stroke-width="2.500"/><circle cx="46" cy="44" r="2" fill="#fff"/><circle cx="46" cy="64" r="2" fill="#fff"/></svg></div>
    <i class="rule"></i>
    <div class="mini"><svg viewBox="0 0 102 60"><rect width="102" height="60" fill="#0b0d18"/><rect width="102" height="5" fill="#3b3336"/><path d="M26 8h7l3 5 5-6h4L35 18Z" fill="#8a46e0"/><path d="M23 24h40M23 28h7M23 32h14M23 36h28M23 41h18M23 50h5M23 57h42" stroke="#33374a" stroke-width="1.500"/><path d="M23 46h20" stroke="#4a7bd0" stroke-width="2"/></svg><svg class="badge"><use href="#chrome"/></svg></div>
    <div class="mini two"><svg viewBox="0 0 102 60"><rect width="102" height="60" fill="#1c1d1f"/><path d="M20 3V60M94 3V35" stroke="#2e3033"/><path d="M4 6h16M26 10h20M28 16h12M30 22h14M32 28h12" stroke="#385145" stroke-width="1.500"/><path d="M4 11h14" stroke="#7c4530" stroke-width="1.500"/><path d="M22 38h40M22 44h30M22 52h24" stroke="#3a5a86" stroke-width="1.500"/></svg><svg class="badge"><use href="#vscode"/></svg></div>
    <svg class="trash" viewBox="0 0 78 100"><path d="M4 14L18 3 26 0 36 6 46 1 58 8 72 12 68 26H8Z" fill="#e6e6e8"/><path d="M20 4L30 20 14 18ZM44 6L58 20 48 22Z" fill="#5a5654"/><path d="M28 12l8-3 3 5-7 3Z" fill="#4ec3e8"/><path d="M44 12l6 2-2 6Z" fill="#e86a3c"/><path d="M1 12Q38 34 77 12L68 92Q66 100 39 100T10 92Z" fill="url(#gTrash)" opacity=".93"/><path d="M14 90Q39 97 65 90" fill="none" stroke="#bfc3c5" stroke-width="2" opacity=".5"/></svg>
  </footer>
</div>
</body>
</html>
```
FILE: styles.css
```css
* { box-sizing: border-box; margin: 0; padding: 0; }
html, body { width: 100%; height: 100%; overflow: hidden; background: #000; }
i, em { font-style: normal; display: block; }
svg { display: block; flex: none; overflow: visible; }
.sprite { position: absolute; width: 0; height: 0; }

.desktop {
  position: relative; width: 4112px; height: 2658px; overflow: hidden;
  transform: scale(.99611); transform-origin: 0 0;
  font-family: Inter, "Liberation Sans", sans-serif; color: #fff; background: #000;
}

/* Wallpaper */
.wall {
  position: absolute; inset: 0;
  background:
    linear-gradient(90deg, #8a8a8e, #77777b 60%, #48484c) 2670px 2396px / 1442px 3px no-repeat,
    linear-gradient(#141416, #000) 2670px 2399px / 1442px 180px no-repeat,
    linear-gradient(#040406, #111214 40%, #1c1d1f 70%, #2a2a32) 2670px 2145px / 1442px 251px no-repeat,
    linear-gradient(#55555b, #55555b) 3990px 1860px / 122px 3px no-repeat,
    linear-gradient(#060607, #232327) 3990px 1560px / 122px 300px no-repeat,
    linear-gradient(#222328, #101012) 0 258px / 12px 4px no-repeat,
    linear-gradient(#0a0a0c, #2a2a31) 0 88px / 12px 170px no-repeat,
    linear-gradient(90deg, #1c1d1f, #1d1e21 40%, #000) 2412px 88px / 540px 130px no-repeat,
    radial-gradient(closest-side, #17171a, #000) 3130px 60px / 1100px 900px no-repeat,
    #000;
}
.arc { position: absolute; left: 4036px; top: 1288px; width: 80px; height: 40px; }
.panels { position: absolute; left: 0; top: 2412px; width: 1100px; height: 246px; display: flex; }
.panels i:nth-child(1) { width: 266px; background: linear-gradient(90deg, #000, #17181a); border-right: 2px solid #2e2e31; }
.panels i:nth-child(2) { width: 535px; background: linear-gradient(90deg, #141416, #000 45%, #16161a); border-right: 2px solid #303033; }
.panels i:nth-child(3) { width: 299px; background: linear-gradient(90deg, #131315, #000); }

/* Files on the desktop */
.files {
  position: absolute; left: 2883px; top: 104px; display: grid;
  grid-template-columns: repeat(5, 244px); grid-template-rows: repeat(10, 224.2px);
}
.file { display: flex; flex-direction: column; align-items: center; font-weight: 600; font-size: 24px; line-height: 30px; letter-spacing: .4px; }
.file .pic { height: 120px; margin-bottom: 23px; display: flex; align-items: center; justify-content: center; }
.file p { white-space: nowrap; text-align: center; text-shadow: 0 2px 5px #000; }
.file p.to { width: 100%; text-align: right; padding-right: calc(122px - var(--end)); }
.file p.from { width: 100%; text-align: left; padding-left: 11px; }
.file .in { margin-right: 16px; }
.file small { font-size: 12px; }
.c1 { grid-column: 1; } .c2 { grid-column: 2; } .c3 { grid-column: 3; } .c4 { grid-column: 4; } .c5 { grid-column: 5; }
.r1 { grid-row: 1; } .r2 { grid-row: 2; } .r3 { grid-row: 3; } .r4 { grid-row: 4; } .r5 { grid-row: 5; }
.r6 { grid-row: 6; } .r7 { grid-row: 7; } .r8 { grid-row: 8; } .r9 { grid-row: 9; } .r10 { grid-row: 10; }
.w118 { width: 118px; height: 100px; } .w118.low { height: 96px; } .w118.tall { height: 102px; }
.w90 { width: 90px; height: 118px; } .w90.low { height: 104px; } .w60 { width: 60px; height: 118px; } .w104 { width: 104px; height: 112px; }
.pic { padding-top: 2px; }
.r1 .w118 { margin-top: 8px; }

/* Task app, one logical pixel is --u */
.app {
  --u: 2px; --bar: #5e578d; --todo: #50a6ee; --prog: #f09d4a; --done: #91cb5c; --foot: 34;
  background: #151319; color: #e6e0e9; display: flex; flex-direction: column; position: relative; overflow: hidden;
}
.appbar {
  flex: none; height: calc(var(--u) * 56); background: var(--bar);
  display: grid; grid-template-columns: calc(var(--u) * 56) 1fr calc(var(--u) * 54); align-items: center; justify-items: center;
}
.status + .appbar { box-shadow: 0 -1px 0 var(--bar); }
.ic { width: calc(var(--u) * 24); height: calc(var(--u) * 24); fill: #e6e0e9; }
.ic.bell { fill: #cac4d0; }
.appbar h1 { font-size: calc(var(--u) * 22); font-weight: 600; line-height: 1.2; margin-left: -4px; }
.board { flex: 1; min-height: 0; padding: calc(var(--u) * 30); display: flex; gap: calc(var(--u) * 60); overflow: hidden; }
.col {
  flex: 0 0 calc(var(--u) * 310); display: flex; flex-direction: column; background: #eee;
  border-radius: calc(var(--u) * 20); box-shadow: 0 0 calc(var(--u) * 14) #a09ba3;
}
.col > header {
  height: calc(var(--u) * 50); padding: 0 calc(var(--u) * 15); display: flex; align-items: center; justify-content: space-between;
  border-radius: calc(var(--u) * 20) calc(var(--u) * 20) 0 0; font-size: calc(var(--u) * 16); letter-spacing: calc(var(--u) * .2);
}
.todo { --c: var(--todo); } .prog { --c: var(--prog); } .done { --c: var(--done); }
.col > header { background: var(--c); }
.list { flex: 1; padding: calc(var(--u) * 10); display: flex; flex-direction: column; gap: calc(var(--u) * 20); }
.card { background: #322d41; border-radius: calc(var(--u) * 10); padding: calc(var(--u) * 10.500) calc(var(--u) * 10) calc(var(--u) * 10); }
.card p {
  font-size: calc(var(--u) * 14); line-height: calc(var(--u) * 20); letter-spacing: var(--ls, .2px);
  margin-right: calc(var(--u) * -6); padding-right: calc(var(--u) * var(--wrap, 5)); padding-bottom: calc(var(--u) * 7.500);
}
.card footer {
  display: flex; align-items: center; height: calc(var(--u) * 32); border-top: calc(var(--u) * 1) solid #4c4953;
  padding: calc(var(--u) * 8) 0 0; font-size: calc(var(--u) * 12);
}
.cm { width: calc(var(--u) * 16); height: calc(var(--u) * 16); fill: #fff; margin-right: calc(var(--u) * 4); }
.pr { width: calc(var(--u) * 24); height: calc(var(--u) * 24); color: #b2ff59; margin-left: auto; }
.pr.two { color: #7cf0ab; }
.addrow {
  height: calc(var(--u) * var(--foot)); display: flex; align-items: center; justify-content: center; gap: calc(var(--u) * 8);
  color: var(--c); font-size: calc(var(--u) * 16); letter-spacing: var(--als, .25px); padding-right: 8px;
}
.addrow svg { width: calc(var(--u) * 24); height: calc(var(--u) * 24); fill: currentColor; }

/* Browser window */
.browser {
  position: absolute; left: 12px; top: 88px; width: 2401px; height: 2325px; border-radius: 22px; overflow: hidden;
  display: flex; flex-direction: column; background: #3b3b3b; box-shadow: 0 0 0 1.500px #4a4a4c;
}
.browser::after { content: ""; position: absolute; inset: 0; border-radius: 22px; border: 2px solid rgba(255,255,255,.16); border-top-color: rgba(255,255,255,.4); }
.lights { display: flex; gap: 16px; }
.lights i { width: 24px; height: 24px; border-radius: 50%; background: #4c4c4c; }
.tabs { flex: none; height: 80px; background: #2b2b2b; display: flex; align-items: flex-start; padding: 12px 0 0 42px; }
.tabs .lights { margin: 17px 38px 0 0; }
.tab {
  width: 464px; height: 68px; background: #3b3b3b; border-radius: 20px 20px 0 0; display: flex; align-items: center;
  padding: 0 24px 12px 16px; font-size: 24px; letter-spacing: -.39px; color: #dfdfdf; position: relative;
}
.tab::before, .tab::after { content: ""; position: absolute; bottom: 0; width: 20px; height: 20px; }
.tab::before { left: -20px; background: radial-gradient(circle at 0 0, transparent 19.500px, #3b3b3b 20px); }
.tab::after { right: -20px; background: radial-gradient(circle at 100% 0, transparent 19.500px, #3b3b3b 20px); }
.tab .fav { width: 32px; height: 32px; margin-right: 16px; }
.tab .x { width: 18px; height: 18px; margin-left: auto; }
.tabs .plus { width: 22px; height: 22px; margin: 17px 0 0 29px; }
.toolbar { flex: none; height: 94px; background: #3b3b3b; border-bottom: 2px solid #4b4b4b; display: flex; align-items: center; padding-left: 30px; }
.toolbar > svg { width: 28px; height: 28px; margin-right: 43px; fill: none; stroke: #787878; stroke-width: 2.800; }
.toolbar > svg:nth-child(2) { margin-right: 45px; }
.toolbar > svg:nth-child(3) { margin-right: 39px; }
.omni { width: 1991px; height: 68px; border-radius: 34px; background: #282828; display: flex; align-items: center; padding: 0 32px 0 9px; }
.info { width: 48px; height: 48px; border-radius: 50%; background: #3c3c3c; display: grid; place-items: center; margin-right: 14px; }
.info svg { width: 28px; height: 28px; }
.url { font-size: 28px; letter-spacing: .26px; color: #c7c7c7; }
.url b { font-weight: 400; color: #e8e8e8; }
.fav2 { width: 38px; height: 38px; fill: #c7c7c7; margin-left: auto; margin-right: -3px; }
.avatar { width: 40px; height: 40px; border-radius: 50%; background: #1b1d1e; margin: 0 54px 0 32px; }
.avatar svg { width: 40px; height: 40px; fill: #dadada; }
.kebab { display: grid; gap: 5px; }
.kebab i { width: 6px; height: 6px; border-radius: 50%; background: #7c7c7c; }
.web { flex: 1; font-family: Roboto, sans-serif; --als: .28px; }
.web .appbar h1 { letter-spacing: -.2px; }

/* Simulator title bars */
.simbar {
  position: absolute; height: 105px; border-radius: 20px; background: #262626; display: flex; align-items: center; padding: 0 54px 0 40px;
  box-shadow: 0 0 0 2px #0c0c0c, inset 0 2px 0 #4f4f4f, 0 30px 60px rgba(0,0,0,.5);
}
.dev { margin-left: 39px; color: #6a6a6a; display: flex; flex-direction: column; }
.dev b { font-size: 26px; line-height: 31px; letter-spacing: .35px; }
.dev span { font-size: 22px; line-height: 27px; letter-spacing: .44px; }
.ipadbar { left: 1040px; top: 1294px; width: 1652px; }
.phonebar { left: 2192px; top: 88px; width: 928px; }
.acts { margin-left: auto; display: flex; gap: 57px; }
.acts svg { height: 38px; width: 40px; fill: none; stroke: #6a6a6a; stroke-width: 2.500; }
.acts svg:nth-child(2) { width: 44px; } .acts svg:nth-child(3) { width: 36px; margin-left: -6px; }

/* iPad */
.ipad {
  position: absolute; left: 1060px; top: 1419px; width: 1611px; height: 1400px; border-radius: 132px; background: #000;
  border: 11px solid #2b2b2b; padding: 87.500px 88.500px;
  box-shadow: 0 0 0 2px #111, inset 0 0 0 1px #000, 0 20px 60px rgba(0,0,0,.45);
}
.ipad::before { content: ""; position: absolute; inset: -10px; border-radius: 130px; border: 2px solid #6a6a6a; }
.tablet { --u: 1.7217px; --bar: #5f578d; --ls: .4px; height: 1220px; border-radius: 40px 40px 0 0; width: 1412px; }
.tablet .col > header { letter-spacing: .6px; }
.tablet .status { height: 41.300px; background: var(--bar); display: flex; align-items: center; gap: 19px; padding: 0 27px; font-size: 20px; font-weight: 500; letter-spacing: .4px; color: #fff; position: relative; }
.tablet .status em { position: absolute; left: 50%; top: 16px; transform: translateX(-50%); display: flex; gap: 5px; }
.tablet .status em i { width: 9px; height: 9px; border-radius: 50%; background: #b3a8de; }
.tablet .status small { font-size: 10px; }
.tablet h1, .phone h1 { font-size: calc(var(--u) * 20.900); letter-spacing: .1px; }

/* iPhone */
.iphone {
  position: absolute; left: 2215px; top: 217px; width: 883px; height: 1844px; border-radius: 150px; background: #2d2d2d; padding: 12px;
  box-shadow: 0 0 0 1px #111, 0 30px 70px rgba(0,0,0,.6);
}
.iphone::after { content: ""; position: absolute; inset: 0; border-radius: 150px; border: 2.500px solid #757575; }
.glass { height: 100%; background: #000; border-radius: 139px; padding: 17px; }
.phone { --u: 1.9167px; --bar: #64568a; --ls: .52px; --als: .5px; --foot: 48; width: 824px; height: 1785px; border-radius: 120px; background: #151118; }
.phone .col > header { letter-spacing: .5px; }
.phone .status { height: 113.100px; background: var(--bar); position: relative; color: #fff; }
.clock { position: absolute; left: 118px; top: 36px; font-size: 33px; line-height: 40px; font-weight: 600; letter-spacing: .8px; }
.island { position: absolute; left: 291.500px; top: 21px; width: 241px; height: 71px; border-radius: 36px; background: #000; }
.sys { position: absolute; left: 586px; top: 41px; display: flex; align-items: center; }
.sys em { display: flex; gap: 4px; margin: 20px 14px 0 0; }
.sys em i { width: 7.500px; height: 7.500px; border-radius: 50%; background: #8d82a8; }
.wifi { width: 36px; height: 27px; margin-right: 14px; }
.batt { width: 60px; height: 28px; }
.homebar { position: absolute; left: 264px; bottom: 16px; width: 296px; height: 10px; border-radius: 5px; background: #4e4e4e; }
.iphone .key { position: absolute; background: #2c2c2c; border-top: 2px solid #555; width: 10px; border-radius: 3px 0 0 3px; }
.k1 { left: -10px; top: 302px; height: 64px; } .k2 { left: -10px; top: 420px; height: 119px; } .k3 { left: -10px; top: 570px; height: 119px; }
.iphone .k4 { left: 883px; width: 7px; top: 498px; height: 192px; border-radius: 0 3px 3px 0; }
.band { position: absolute; background: #1b1b1b; width: 10px; height: 12px; }
.b1 { left: 2px; top: 184px; } .b2 { right: 2px; top: 177px; } .b3 { left: 2px; bottom: 170px; } .b4 { right: 2px; bottom: 176px; }
.b5 { top: 2px; left: 700px; } .b6 { bottom: 2px; left: 173px; }

/* Android phone */
.pixel {
  position: absolute; left: 3174px; top: 152px; width: 838px; height: 1790px; border-radius: 84px; padding: 14px 13px 16px;
  background: linear-gradient(90deg, #3b3b3b, #777 4px, #2b2b2b 6px, #bdbdbd 9px, #6a6a6a 11px, #222 14px, #222 824px, #6a6a6a 827px, #bdbdbd 830px, #2b2b2b 832px, #777 834px, #3b3b3b);
  box-shadow: inset 0 0 0 2px #4e4e4e, inset 0 3px 6px 6px #7d7d7d;
}
.rim { height: 100%; border-radius: 72px; background: #111; padding: 22px 11px 27px; box-shadow: inset 0 0 14px 3px #6b6b6b, 0 0 0 1.500px #000; }
.droid { --u: 1.92px; --bar: #605793; --todo: #18a9f8; --prog: #ff9933; --foot: 48; --als: .07px; --ls: .12px; --wrap: 14; height: 1712px; width: 790px; border-radius: 46px; font-family: Roboto, sans-serif; }
.droid .status { height: 46px; background: var(--bar); display: flex; align-items: center; justify-content: space-between; padding: 2px 54px 0 15px; font-size: 27px; letter-spacing: .37px; color: #fff; position: relative; }
.droid .status svg { width: 84px; height: 26px; fill: #fff; }
.lens { position: absolute; left: 372.500px; top: 18px; width: 45px; height: 45px; border-radius: 50%; background: radial-gradient(circle, #6a4a2a 0 3px, #1c1c1e 8px, #131313 40%, #151515); z-index: 2; }
.droid .appbar h1 { justify-self: start; margin-left: calc(var(--u) * 15.800); letter-spacing: .25px; }
.droid .card p { font-weight: 500; }
.droid .addrow { font-weight: 500; }
.nav { flex: none; height: 46px; background: #000; display: grid; place-items: center; }
.nav i { width: 208px; height: 8px; border-radius: 4px; background: #eee; }
.pixel .key { position: absolute; left: 837px; width: 6px; background: #6e6e6e; border-radius: 0 3px 3px 0; }
.p1 { top: 584px; height: 111px; } .p2 { top: 804px; height: 219px; }

.emubar { position: absolute; left: 4027px; top: 153px; width: 118px; height: 1028px; background: #efefef; display: flex; flex-direction: column; align-items: center; }
.emubar > svg { width: 44px; height: 44px; margin: 22px 0; fill: #5f7d8c; }
.winctl { height: 51px; width: 100%; display: flex; align-items: center; gap: 37px; padding: 6px 0 0 27px; }
.winctl svg { width: 15px; height: 15px; stroke: #5f7d8c; stroke-width: 2; }

/* Menu bar */
.menubar { position: absolute; left: 0; top: 0; width: 4112px; height: 86px; background: linear-gradient(90deg, #0a0a0c, #060608 60%, #000 75%); display: flex; align-items: center; padding: 0 32px 2px 37px; font-size: 27px; }
.logo { width: 34px; height: 33px; fill: #fff; margin-right: 37px; }
.menubar b { font-size: 26px; letter-spacing: .2px; }
.tray { margin-left: auto; display: flex; align-items: center; gap: 38px; font-weight: 500; color: #ececec; }
.t36 { width: 36px; height: 36px; } .t30 { width: 30px; height: 30px; } .t51 { width: 51px; height: 24px; margin-right: -4px; }
.t43 { width: 43px; height: 26px; } .t26 { width: 26px; height: 26px; } .t27 { width: 27px; height: 26px; }
.kbd { width: 43px; height: 32px; border-radius: 6px; background: #e8e8e8; color: #000; font: 700 25px/32px Inter, sans-serif; text-align: center; }
.date { letter-spacing: .19px; } .time { margin-left: -28px; } .time small { font-size: 10px; }

/* Dock */
.dock {
  position: absolute; left: 99px; top: 2510px; width: 3914px; height: 138px; border-radius: 46px; display: flex; gap: 28.200px; padding: 19px 0 0 17px;
  background: rgba(57,57,57,.4); -webkit-backdrop-filter: blur(32px); backdrop-filter: blur(32px);
  border: 2px solid rgba(255,255,255,.17); box-shadow: 0 0 0 1px rgba(0,0,0,.5), 0 0 90px rgba(0,0,0,.22);
}
.slot { flex: none; width: 87px; height: 87px; position: relative; }
.slot > svg { width: 87px; height: 87px; filter: drop-shadow(0 2px 3px rgba(0,0,0,.3)); }
.slot > svg.big { width: 106px; height: 106px; margin: -9.500px; }
.on::after { content: ""; position: absolute; left: 39.500px; bottom: -26px; width: 8px; height: 8px; border-radius: 50%; background: #a0a0a0; }
.on.lit::after { background: #fff; }
.cal { border-radius: 20px; background: linear-gradient(#e4594f 27px, #f8f7f5 27px); display: flex; flex-direction: column; align-items: center; color: #fff; }
.cal b { font-size: 17px; line-height: 29px; font-weight: 600; }
.cal span { font-size: 52px; line-height: 54px; font-weight: 300; color: #222; letter-spacing: -2px; }
.tv { border-radius: 20px; background: linear-gradient(#2c3734, #0d1113); display: flex; align-items: center; justify-content: center; color: #fff; font-size: 38px; font-weight: 500; padding-bottom: 2px; }
.tv > svg { width: 31px; height: 31px; fill: #fff; margin: 0 -2px 6px 0; }
.rule { flex: none; width: 2px; height: 102px; background: #4d4d4f; margin: -2px 11px 0 10px; }
.rule + .mini { margin-left: -6px; }
.mini { flex: none; width: 101px; height: 60px; margin-top: 14px; position: relative; }
.mini > svg { width: 101px; height: 60px; }
.mini .badge { position: absolute; left: 67px; top: 46px; width: 32px; height: 32px; }
.mini.two { margin-left: -14px; }
.trash { width: 78px; height: 100px; margin-top: -7px; }
```
